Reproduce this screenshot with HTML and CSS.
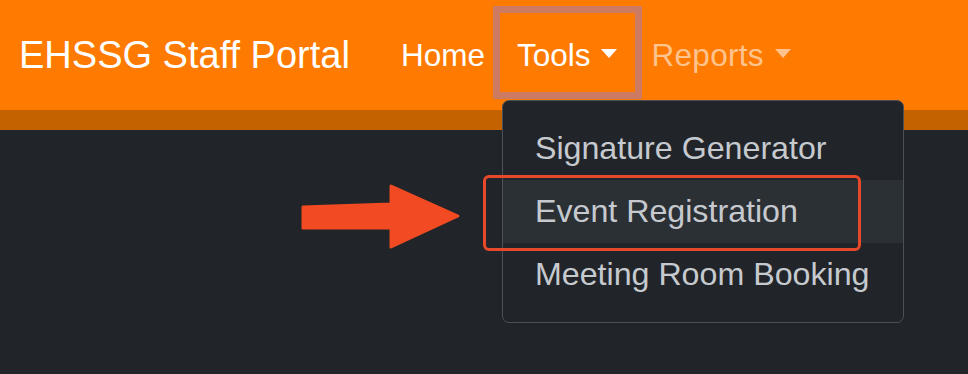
FILE: index.html
```html
<!DOCTYPE html>
<html lang="en">
<head>
    <meta charset="UTF-8">
    <meta name="viewport" content="width=device-width, initial-scale=1.0">
    <title>EHSSG Staff Portal</title>
    <link rel="stylesheet" href="styles.css">
</head>
<body>
    <header class="navbar">
        <a class="brand" href="#">EHSSG Staff Portal</a>
        <ul class="nav">
            <li class="nav-item">
                <a class="nav-link" href="#">Home</a>
            </li>
            <li class="nav-item dropdown">
                <a class="nav-link dropdown-toggle" href="#">Tools</a>
                <div class="highlight-box"></div>
                <div class="dropdown-menu">
                    <a class="dropdown-item" href="#">Signature Generator</a>
                    <a class="dropdown-item active" href="#">Event Registration</a>
                    <a class="dropdown-item" href="#">Meeting Room Booking</a>
                    <div class="callout-box"></div>
                </div>
            </li>
            <li class="nav-item">
                <a class="nav-link dropdown-toggle muted" href="#">Reports</a>
            </li>
        </ul>
    </header>
    <div class="navbar-strip"></div>

    <main class="content">
        <svg class="arrow" width="164" height="70" viewBox="0 0 164 70">
            <path d="M3 24 L91 21 L91 3 L158 33 L91 64 L91 45 L3 45 Z" fill="#f24a22" stroke="#f24a22" stroke-width="3" stroke-linejoin="round"/>
        </svg>
    </main>
</body>
</html>
```

FILE: styles.css
```css
body {
    font-family: "Liberation Sans", Arial, sans-serif;
    margin: 0;
    padding: 0;
    background-color: #212529;
    height: 100vh;
    overflow: hidden;
}

a {
    text-decoration: none;
}

.navbar {
    display: flex;
    align-items: center;
    height: 110px;
    padding-left: 19px;
    background-color: #fe7a00;
}

.brand {
    font-size: 38px;
    color: #fff;
    margin-right: 35px;
}

.nav {
    display: flex;
    align-self: stretch;
    list-style: none;
    margin: 0;
    padding: 0;
}

.nav-item {
    position: relative;
    display: flex;
}

.nav-link {
    display: flex;
    align-items: center;
    padding: 0 16px;
    font-size: 31.5px;
    color: #fff;
}

.nav-link.muted {
    color: #ffc38e;
    padding-left: 18px;
    letter-spacing: 0.3px;
}

.dropdown-toggle::after {
    content: "";
    display: inline-block;
    margin-left: 11px;
    margin-top: -4px;
    border-left: 8px solid transparent;
    border-right: 8px solid transparent;
    border-top: 9px solid currentColor;
}

.highlight-box {
    position: absolute;
    left: -8px;
    top: 6px;
    width: 135px;
    height: 79px;
    border: 7px solid #cc7a62;
}

.dropdown-menu {
    position: absolute;
    top: 100px;
    left: 1px;
    width: 400px;
    padding: 16px 0;
    background-color: #212529;
    border: 1px solid #4b5157;
    border-radius: 7px;
}

.dropdown-item {
    display: flex;
    align-items: center;
    height: 63px;
    padding: 0 32px;
    font-size: 32.2px;
    color: #c6cacf;
    white-space: nowrap;
}

.dropdown-item.active {
    background-color: #2b3035;
}

.callout-box {
    position: absolute;
    left: -20px;
    top: 74px;
    width: 372px;
    height: 70px;
    border: 3px solid #e8492b;
    border-radius: 6px;
}

.navbar-strip {
    height: 20px;
    background-color: #c56200;
}

.content {
    position: relative;
}

.arrow {
    position: absolute;
    left: 300px;
    top: 53px;
}
```
